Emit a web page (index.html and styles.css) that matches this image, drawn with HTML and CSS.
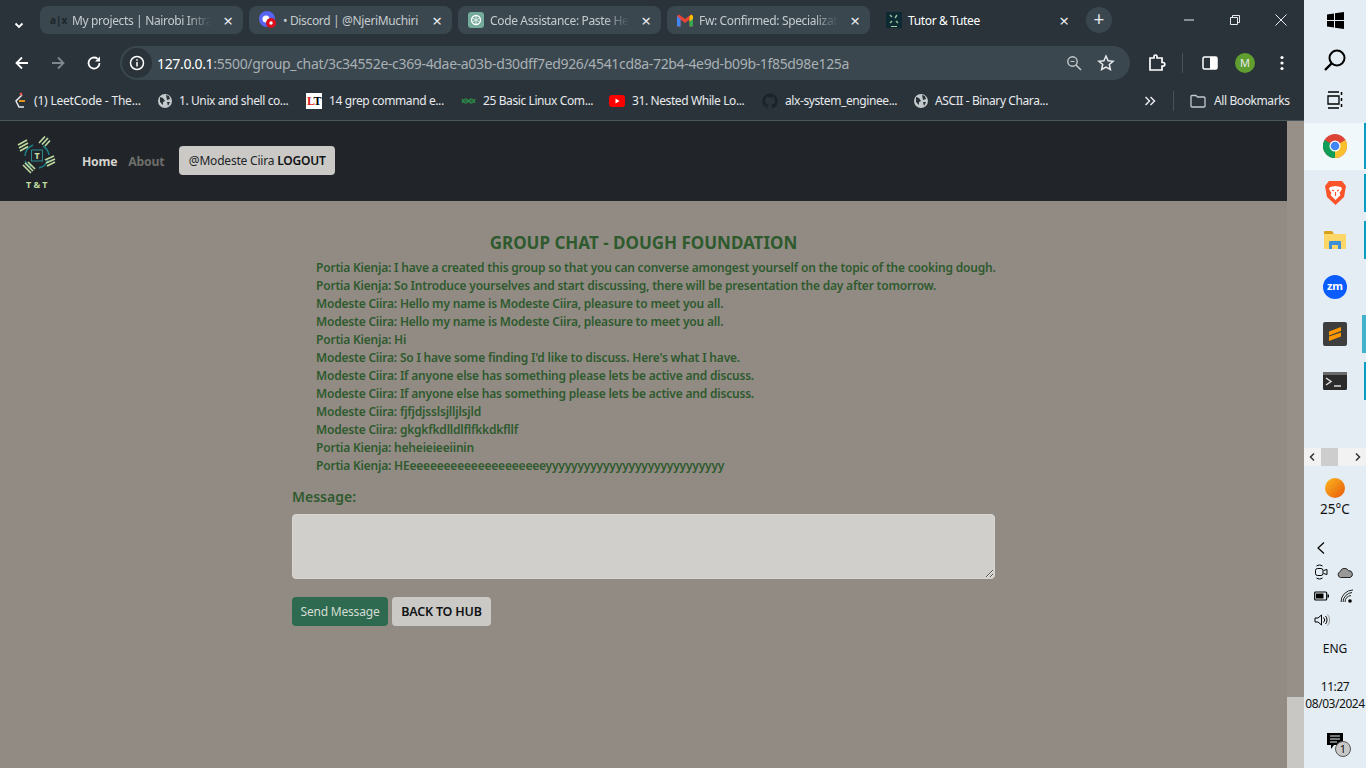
FILE: index.html
```html
<!DOCTYPE html>
<html lang="en">
<head>
  <meta charset="UTF-8">
  <title>Tutor &amp; Tutee</title>
  <link rel="stylesheet" href="styles.css">
</head>
<body>
<div class="screen">
  <div class="browser">
    <div class="tabstrip">
      <svg class="tab-menu" width="12" height="12" viewBox="0 0 12 12"><path d="M2.500 4.500 6 8l3.500-3.500" fill="none" stroke="#fff" stroke-width="1.800"/></svg>
      <div class="tab tab-fade">
        <span class="alx-icon">a|x</span>
        <span class="tab-title">My projects | Nairobi Intra</span>
        <span class="tab-x">×</span>
      </div>
      <div class="tab">
        <svg class="fav" width="18" height="18" viewBox="0 0 18 18"><circle cx="8" cy="8" r="8" fill="#5865f2"/><circle cx="7" cy="8" r="3.500" fill="#fff"/><circle cx="12" cy="12" r="5" fill="#d9101c"/><circle cx="12" cy="12" r="1.700" fill="#fff"/></svg>
        <span class="tab-title">• Discord | @NjeriMuchiri</span>
        <span class="tab-x">×</span>
      </div>
      <div class="tab tab-fade">
        <svg class="fav" width="16" height="16" viewBox="0 0 16 16"><rect width="16" height="16" rx="3" fill="#74aa9c"/><circle cx="8" cy="8" r="4.500" fill="none" stroke="#fff" stroke-width="1.300"/><path d="M8 3.500v9M4 5.800l8 4.400M12 5.800l-8 4.400" stroke="#fff" stroke-width=".7"/></svg>
        <span class="tab-title">Code Assistance: Paste He</span>
        <span class="tab-x">×</span>
      </div>
      <div class="tab tab-fade">
        <svg class="fav" width="16" height="13" viewBox="0 0 16 13"><path d="M0 2v9.500a1 1 0 0 0 1 1h2.500V5.500L8 9l4.500-3.500v7H15a1 1 0 0 0 1-1V2L14 .5 8 5 2 .5z" fill="#ea4335"/><path d="M0 2v9.500a1 1 0 0 0 1 1h2.500V5z" fill="#4285f4"/><path d="M16 2v9.500a1 1 0 0 1-1 1h-2.500V5z" fill="#34a853"/><path d="M12.500 2.500 14 .5 16 2v3l-3.500 2.500z" fill="#fbbc04"/></svg>
        <span class="tab-title">Fw: Confirmed: Specializat</span>
        <span class="tab-x">×</span>
      </div>
      <div class="tab tab-active">
        <svg class="fav" width="16" height="16" viewBox="0 0 16 16"><rect width="16" height="16" fill="#0d2a33"/><path d="M4 3l2 2M11 3 9 6M4 11l2-2M12 11l-2-2" stroke="#8fbf9a" stroke-width="1.500"/><rect x="5" y="14" width="6" height="1" fill="#9fcfa8"/></svg>
        <span class="tab-title">Tutor &amp; Tutee</span>
        <span class="tab-x">×</span>
      </div>
      <div class="new-tab">+</div>
      <div class="win-controls">
        <svg width="12" height="12" viewBox="0 0 12 12"><path d="M1 6h10" stroke="#e8eaed"/></svg>
        <svg width="12" height="12" viewBox="0 0 12 12"><path d="M1.500 3.500h7v7h-7zM3.500 3.500v-2h7v7h-2" fill="none" stroke="#e8eaed"/></svg>
        <svg width="12" height="12" viewBox="0 0 12 12"><path d="M.5.5l11 11M11.500.5l-11 11" stroke="#e8eaed"/></svg>
      </div>
    </div>

    <div class="toolbar">
      <svg class="tool-icon" width="16" height="16" viewBox="0 0 16 16"><path d="M14 8H3M8 2.500 2.500 8 8 13.500" fill="none" stroke="#fff" stroke-width="1.800"/></svg>
      <svg class="tool-icon" width="16" height="16" viewBox="0 0 16 16"><path d="M2 8h11M8 2.500 13.500 8 8 13.500" fill="none" stroke="#7d8890" stroke-width="1.800"/></svg>
      <svg class="tool-icon" width="16" height="16" viewBox="0 0 16 16"><path d="M13.500 8A5.500 5.500 0 1 1 11.500 3.800" fill="none" stroke="#fff" stroke-width="1.800"/><path d="M14 1.500v5h-5z" fill="#fff"/></svg>
      <div class="omnibox">
        <span class="site-info">
          <svg width="16" height="16" viewBox="0 0 16 16"><circle cx="8" cy="8" r="6.500" fill="none" stroke="#fff" stroke-width="1.500"/><path d="M8 7v4.500M8 4.300v1.500" stroke="#fff" stroke-width="1.500"/></svg>
        </span>
        <span class="url"><span class="url-host">127.0.0.1</span>:5500/group_chat/3c34552e-c369-4dae-a03b-d30dff7ed926/4541cd8a-72b4-4e9d-b09b-1f85d98e125a</span>
        <svg width="16" height="16" viewBox="0 0 16 16"><circle cx="6.500" cy="6.500" r="4.700" fill="none" stroke="#c4c9cc" stroke-width="1.400"/><path d="M10 10l5 5" stroke="#c4c9cc" stroke-width="1.600"/><path d="M4.500 6.500h4" stroke="#c4c9cc"/></svg>
        <svg class="star" width="18" height="18" viewBox="0 0 18 18"><path d="M9 2l2.100 4.700 5 .5-3.800 3.300 1.100 5L9 13l-4.400 2.500 1.100-5L1.900 7.200l5-.5z" fill="none" stroke="#e8eaed" stroke-width="1.500"/></svg>
      </div>
      <div class="toolbar-right">
        <svg width="18" height="18" viewBox="0 0 18 18"><path d="M2 4h4V2.500a1.500 1.500 0 0 1 3 0V4h5v4.500h1a1.800 1.800 0 0 1 0 3.600h-1V16H2z" fill="none" stroke="#fff" stroke-width="1.700"/></svg>
        <span class="tool-sep"></span>
        <svg width="16" height="16" viewBox="0 0 16 16"><rect x="1" y="2" width="14" height="12" rx="1.500" fill="none" stroke="#fff" stroke-width="1.500"/><rect x="8" y="2" width="7" height="12" fill="#fff"/></svg>
        <span class="avatar">M</span>
        <svg width="4" height="16" viewBox="0 0 4 16"><circle cx="2" cy="2.500" r="1.600" fill="#fff"/><circle cx="2" cy="8" r="1.600" fill="#fff"/><circle cx="2" cy="13.500" r="1.600" fill="#fff"/></svg>
      </div>
    </div>

    <div class="bookmarks">
      <div class="bookmark">
        <svg width="14" height="18" viewBox="0 0 14 18"><path d="M9 3 3 9l3 6h5" fill="none" stroke="#e8eaed" stroke-width="1.500"/><path d="M6 9h6" stroke="#f89f1b" stroke-width="1.800"/><circle cx="8" cy="2" r="1.500" fill="#d9534f"/></svg>
        <span>(1) LeetCode - The...</span>
      </div>
      <div class="bookmark">
        <svg width="14" height="14" viewBox="0 0 14 14"><circle cx="7" cy="7" r="7" fill="#c4c9cc"/><path d="M2 3l3 1 2 3-2 1v3L2 8zM8 1l3 1 1 3-3 1zM9 8h3l-2 4z" fill="#2a333a"/></svg>
        <span>1. Unix and shell co...</span>
      </div>
      <div class="bookmark">
        <span class="lt-icon"><span class="lt-red">L</span>T</span>
        <span>14 grep command e...</span>
      </div>
      <div class="bookmark">
        <svg width="15" height="14" viewBox="0 0 15 14"><path d="M1 7h13" stroke="#2e8b47"/><path d="M1 9c2-5 4-5 6.500-2s4.500 3 6.500-2M1 5c2 5 4 5 6.500 2s4.500-3 6.500 2" fill="none" stroke="#2e8b47" stroke-width="1.200"/></svg>
        <span>25 Basic Linux Com...</span>
      </div>
      <div class="bookmark">
        <svg width="16" height="12" viewBox="0 0 16 12"><rect width="16" height="12" rx="3" fill="#f00"/><path d="M6.500 3.500v5l4-2.500z" fill="#fff"/></svg>
        <span>31. Nested While Lo...</span>
      </div>
      <div class="bookmark">
        <svg width="16" height="16" viewBox="0 0 16 16"><path d="M8 .5a7.700 7.700 0 0 0-2.400 15c.4.100.5-.2.500-.4v-1.300c-2.100.4-2.600-.9-2.600-.9-.4-.9-.9-1.200-.9-1.200-.7-.5.100-.5.100-.5.800.1 1.200.8 1.200.8.700 1.200 1.900.9 2.300.7.100-.5.300-.9.500-1.100-1.700-.2-3.500-.9-3.500-3.800 0-.8.300-1.500.8-2-.1-.2-.4-1 .1-2 0 0 .6-.2 2.100.8a7 7 0 0 1 3.800 0c1.500-1 2.100-.8 2.100-.8.400 1 .2 1.800.1 2 .5.500.8 1.200.8 2 0 2.900-1.800 3.600-3.500 3.800.3.200.5.700.5 1.400v2.100c0 .2.100.5.500.4A7.700 7.700 0 0 0 8 .5z" fill="#1b2228"/></svg>
        <span>alx-system_enginee...</span>
      </div>
      <div class="bookmark">
        <svg width="14" height="14" viewBox="0 0 14 14"><circle cx="7" cy="7" r="7" fill="#c4c9cc"/><path d="M2 3l3 1 2 3-2 1v3L2 8zM8 1l3 1 1 3-3 1zM9 8h3l-2 4z" fill="#2a333a"/></svg>
        <span>ASCII - Binary Chara...</span>
      </div>
      <div class="bookmarks-end">
        <svg width="12" height="12" viewBox="0 0 12 12"><path d="M1.500 2l4 4-4 4M6.500 2l4 4-4 4" fill="none" stroke="#e8eaed" stroke-width="1.500"/></svg>
        <span class="tool-sep"></span>
        <svg width="16" height="14" viewBox="0 0 16 14"><path d="M1 2.500a1 1 0 0 1 1-1h4l1.500 1.500H14a1 1 0 0 1 1 1v8a1 1 0 0 1-1 1H2a1 1 0 0 1-1-1z" fill="none" stroke="#c4c9cc" stroke-width="1.300"/></svg>
        <span class="all-bm">All Bookmarks</span>
      </div>
    </div>

    <div class="viewport">
      <div class="page">
        <nav class="navbar">
          <div class="brand">
            <svg width="40" height="40" viewBox="0 0 40 40">
              <path d="M8 20A13 13 0 0 1 16 9M26 10a13 13 0 0 1 6 9M31 24a13 13 0 0 1-9 8M14 31a13 13 0 0 1-6-6" fill="none" stroke="#1d7f88" stroke-width="1.500"/>
              <path d="M1 9l9-5M2 12l9-5M3 15l8-4.500M22 7l6-6.500M25 8.500l6-6.500M28 10l5-5.500M28 24l9-4M29 27l9-4M30 30l8-4M6 29l8 8M8 27l8 8M11 26l7 7" stroke="#bcd9a0" stroke-width="1.700"/>
              <rect x="14.500" y="14" width="11" height="11" fill="none" stroke="#2a8a90"/>
            </svg>
            <span class="brand-t">T</span>
            <span class="brand-name">T&amp;T</span>
          </div>
          <a class="nav-link nav-active">Home</a>
          <a class="nav-link">About</a>
          <a class="btn btn-light logout">@Modeste Ciira <span class="logout-word">LOGOUT</span></a>
        </nav>

        <main class="chat">
          <h2 class="chat-title">GROUP CHAT - DOUGH FOUNDATION</h2>
          <ul class="messages">
            <li>Portia Kienja: I have a created this group so that you can converse amongest yourself on the topic of the cooking dough.</li>
            <li>Portia Kienja: So Introduce yourselves and start discussing, there will be presentation the day after tomorrow.</li>
            <li>Modeste Ciira: Hello my name is Modeste Ciira, pleasure to meet you all.</li>
            <li>Modeste Ciira: Hello my name is Modeste Ciira, pleasure to meet you all.</li>
            <li>Portia Kienja: Hi</li>
            <li>Modeste Ciira: So I have some finding I'd like to discuss. Here's what I have.</li>
            <li>Modeste Ciira: If anyone else has something please lets be active and discuss.</li>
            <li>Modeste Ciira: If anyone else has something please lets be active and discuss.</li>
            <li>Modeste Ciira: fjfjdjsslsjlljlsjld</li>
            <li>Modeste Ciira: gkgkfkdlldlflfkkdkfllf</li>
            <li>Portia Kienja: heheieieeiinin</li>
            <li>Portia Kienja: HEeeeeeeeeeeeeeeeeeeeeyyyyyyyyyyyyyyyyyyyyyyyyyyyy</li>
          </ul>
          <label class="msg-label" for="message">Message:</label>
          <textarea class="msg-input" id="message"></textarea>
          <div class="actions">
            <a class="btn btn-send">Send Message</a>
            <a class="btn btn-light btn-back">BACK TO HUB</a>
          </div>
        </main>
      </div>
      <div class="scrollbar"><div class="scroll-thumb"></div></div>
    </div>
  </div>

  <aside class="taskbar">
    <div class="task-slot slot-40">
      <svg width="17" height="17" viewBox="0 0 17 17"><path d="M0 2.500 7 1.500v6.500H0zM8 1.300 17 0v8H8zM0 9h7v6.500l-7-1zM8 9h9v8l-9-1.300z" fill="#000"/></svg>
    </div>
    <div class="task-slot slot-40">
      <svg width="24" height="24" viewBox="0 0 24 24"><circle cx="14" cy="10" r="7.500" fill="none" stroke="#000" stroke-width="2"/><path d="M8.500 15.500 2 22" stroke="#000" stroke-width="2.400"/></svg>
    </div>
    <div class="task-slot slot-view">
      <svg width="18" height="18" viewBox="0 0 18 18"><path d="M2 1h11M2 17h11M2 5h11v8H2z" fill="none" stroke="#000" stroke-width="1.300"/><path d="M15.500 1v3M15.500 7v3M15.500 13v3" stroke="#000" stroke-width="1.500"/></svg>
    </div>
    <div class="task-slot slot-47 slot-open slot-hot">
      <svg width="24" height="24" viewBox="0 0 24 24"><circle cx="12" cy="12" r="12" fill="#db4437"/><path d="M12 12 22.400 6A12 12 0 0 1 12 24z" fill="#fbc02d"/><path d="M12 12 12 24A12 12 0 0 1 1.600 6z" fill="#0f9d58"/><circle cx="12" cy="12" r="5.500" fill="#fff"/><circle cx="12" cy="12" r="4.300" fill="#4285f4"/></svg>
    </div>
    <div class="task-slot slot-47 slot-open">
      <svg width="21" height="24" viewBox="0 0 21 24"><path d="M4 0h13l4 5-2 11-8.500 8L2 16 0 5z" fill="#fb542b"/><path d="M10.500 5 5 6l-1 2 2.500 4-1 2 5 5 5-5-1-2L17 8l-1-2z" fill="#fff"/><path d="M7 9l2 1M14 9l-2 1M10.500 11v4" stroke="#fb542b" stroke-width="1.200"/></svg>
    </div>
    <div class="task-slot slot-47 slot-open">
      <svg width="22" height="18" viewBox="0 0 22 18"><path d="M0 1a1 1 0 0 1 1-1h7l2 3H0z" fill="#d9a21b"/><path d="M0 3h21a1 1 0 0 1 1 1v13a1 1 0 0 1-1 1H1a1 1 0 0 1-1-1z" fill="#fcd768"/><path d="M5 18v-7a1 1 0 0 1 1-1h10a1 1 0 0 1 1 1v7h-3v-4H8v4z" fill="#3e8fd6"/></svg>
    </div>
    <div class="task-slot slot-47">
      <span class="zoom-icon">zm</span>
    </div>
    <div class="task-slot slot-47 slot-open slot-wide">
      <svg width="24" height="24" viewBox="0 0 24 24"><rect width="24" height="24" rx="2" fill="#3e3e3e"/><path d="M6 9.500 18 5v4L6 13.500zM6 14.500 18 10.500v4L6 19z" fill="#ff9800"/></svg>
    </div>
    <div class="task-slot slot-47 slot-open">
      <svg width="24" height="18" viewBox="0 0 24 18"><rect width="24" height="18" rx="1.500" fill="#2b2b2b"/><rect width="24" height="3" fill="#6a6a6a"/><path d="M3 6l5 3.500L3 13" fill="none" stroke="#ddd" stroke-width="1.500"/><path d="M11 14h7" stroke="#ddd" stroke-width="1.500"/></svg>
    </div>
    <div class="task-scroller">
      <svg width="8" height="10" viewBox="0 0 8 10"><path d="M6 1.500 2.500 5 6 8.500" fill="none" stroke="#333" stroke-width="1.500"/></svg>
      <span class="task-scroll-thumb"></span>
      <svg class="scroller-next" width="8" height="10" viewBox="0 0 8 10"><path d="M2 1.500 5.500 5 2 8.500" fill="none" stroke="#333" stroke-width="1.500"/></svg>
    </div>
    <div class="weather">
      <span class="sun"></span>
      <span>25°C</span>
    </div>
    <div class="tray">
      <svg class="tray-arrow" width="10" height="14" viewBox="0 0 10 14"><path d="M8 1.500 2 7l6 5.500" fill="none" stroke="#000" stroke-width="1.200"/></svg>
      <svg width="14" height="16" viewBox="0 0 14 16"><rect x="1.500" y="4.500" width="7.500" height="7" rx="2" fill="none" stroke="#000"/><path d="M9.500 6.500 13 5.500v5L9.500 9.500M2.500 2c2-1.300 4-1.300 6 0M2.500 14c2 1.300 4 1.300 6 0" fill="none" stroke="#000"/></svg>
      <svg width="16" height="11" viewBox="0 0 16 11"><path d="M3.500 10.500a3 3 0 0 1-.3-5.800 4.500 4.500 0 0 1 8.300-1A3.500 3.500 0 0 1 13 10.500z" fill="#999" stroke="#222"/></svg>
      <svg width="15" height="10" viewBox="0 0 15 10"><rect x=".7" y="1" width="12" height="8" rx="1" fill="none" stroke="#000" stroke-width="1.200"/><rect x="2" y="2.500" width="7.500" height="5" fill="#000"/><rect x="13.500" y="3.500" width="1.500" height="3" fill="#000"/></svg>
      <svg class="tray-wifi" width="14" height="14" viewBox="0 0 14 14"><path d="M1 13A12 12 0 0 1 13 1M3 13A10 10 0 0 1 12 3.500M5 13A7 7 0 0 1 11 6.500" fill="none" stroke="#222"/><circle cx="10" cy="12" r="1.800" fill="#000"/></svg>
      <svg width="16" height="14" viewBox="0 0 16 14"><path d="M1 5h3l3.500-3v10L4 9H1z" fill="none" stroke="#000"/><path d="M9.500 4.500a3.500 3.500 0 0 1 0 5M11.500 3a6 6 0 0 1 0 8" fill="none" stroke="#000"/><path d="M13.500 1.500a8 8 0 0 1 0 11" fill="none" stroke="#999"/></svg>
    </div>
    <div class="lang">ENG</div>
    <div class="clock">
      <span>11:27</span>
      <span>08/03/2024</span>
    </div>
    <div class="notify">
      <svg width="16" height="16" viewBox="0 0 16 16"><path d="M0 0h16v12H7l-3 4v-4H0z" fill="#000"/><path d="M3 3h10M3 6h10M3 9h7" stroke="#e3edf3"/></svg>
      <span class="notify-badge">1</span>
    </div>
  </aside>
</div>
</body>
</html>
```

FILE: styles.css
```css
* {
  box-sizing: border-box;
}

html,
body {
  margin: 0;
  height: 100%;
  overflow: hidden;
}

body {
  font-family: "Noto Sans", "Open Sans", sans-serif;
}

.screen {
  display: flex;
  width: 1366px;
  height: 768px;
}

.browser {
  width: 1304px;
  display: flex;
  flex-direction: column;
  background-color: #2a333a;
  color: #e8eaed;
  font-size: 12px;
}

/* tabs */
.tabstrip {
  height: 42px;
  display: flex;
  align-items: flex-end;
  padding-left: 13px;
}

.tab-menu {
  margin-right: 15px;
  margin-bottom: 11px;
}

.tab {
  width: 203px;
  height: 28px;
  margin-right: 6px;
  margin-bottom: 8px;
  padding: 0 10px;
  display: flex;
  align-items: center;
  gap: 6px;
  border-radius: 8px;
  background-color: #3a474f;
  color: #c6cbce;
}

.tab-active {
  background-color: transparent;
  color: #fff;
  margin-right: 2px;
}

.fav {
  flex: none;
}

.alx-icon {
  width: 16px;
  flex: none;
  font-size: 10px;
  font-weight: 700;
  color: #1d2429;
}

.tab-title {
  flex: 1;
  white-space: nowrap;
  letter-spacing: -0.35px;
}

.tab-fade .tab-title {
  mask-image: linear-gradient(to right, #000 calc(100% - 30px), transparent calc(100% - 6px));
}

.tab-x {
  font-size: 17px;
  line-height: 1;
  color: #e8eaed;
}

.new-tab {
  width: 26px;
  height: 26px;
  margin-bottom: 9px;
  margin-left: 5px;
  border-radius: 50%;
  background-color: #3a474f;
  text-align: center;
  font-size: 19px;
  line-height: 25px;
}

.win-controls {
  margin-left: auto;
  margin-right: 17px;
  margin-bottom: 16px;
  display: flex;
  gap: 34px;
}

/* toolbar */
.toolbar {
  height: 42px;
  display: flex;
  align-items: center;
  padding-left: 14px;
}

.tool-icon {
  margin-right: 20px;
}

.toolbar .tool-icon:nth-child(3) {
  margin-right: 18px;
}

.omnibox {
  width: 1010px;
  height: 34px;
  padding: 0 15px 0 2px;
  display: flex;
  align-items: center;
  border-radius: 17px;
  background-color: #3a474f;
  font-size: 14px;
}

.site-info {
  width: 30px;
  height: 30px;
  margin-right: 5px;
  display: flex;
  align-items: center;
  justify-content: center;
  border-radius: 50%;
  background-color: #2a333a;
}

.url {
  flex: 1;
  white-space: nowrap;
  color: #a9b0b4;
  letter-spacing: -0.34px;
}

.url-host {
  color: #fff;
}

.star {
  margin-left: 15px;
}

.toolbar-right {
  flex: 1;
  display: flex;
  align-items: center;
  padding-left: 18px;
  gap: 17px;
}

.tool-sep {
  width: 1px;
  height: 20px;
  background-color: #46535b;
}

.toolbar-right .tool-sep {
  margin: 0 2px 0 -1px;
}

.avatar {
  width: 20px;
  height: 20px;
  margin: 0 8px 0 0;
  border-radius: 50%;
  background-color: #5f9e2f;
  text-align: center;
  font-size: 11px;
  line-height: 20px;
}

/* bookmarks */
.bookmarks {
  height: 37px;
  display: grid;
  grid-template-columns: 145px 148px 155px 148px 153px 152px 229px 1fr;
  align-items: center;
  padding: 0 0 3px 13px;
  border-bottom: 1px solid #4a555c;
}

.bookmark {
  display: flex;
  align-items: center;
  gap: 7px;
  white-space: nowrap;
  letter-spacing: -0.4px;
}

.bookmark:first-child {
  letter-spacing: -0.2px;
}

.lt-icon {
  width: 16px;
  height: 16px;
  background-color: #fff;
  color: #000;
  font-family: "Liberation Serif", serif;
  font-size: 12px;
  font-weight: 700;
  line-height: 16px;
  text-align: center;
}

.lt-red {
  color: #d81e1e;
}

.bookmarks-end {
  display: flex;
  align-items: center;
  margin-left: 1px;
  white-space: nowrap;
  letter-spacing: -0.4px;
}

.bookmarks-end .tool-sep {
  margin: 0 16px 0 17px;
}

.all-bm {
  margin-left: 8px;
}

/* page */
.viewport {
  flex: 1;
  display: flex;
  min-height: 0;
}

.page {
  flex: 1;
  background-color: #928b84;
}

.scrollbar {
  width: 17px;
  display: flex;
  flex-direction: column;
  justify-content: flex-end;
  background-color: #979089;
}

.scroll-thumb {
  height: 71px;
  background-color: #c8c7c3;
}

.navbar {
  height: 80px;
  padding-left: 17px;
  display: flex;
  align-items: center;
  background-color: #212529;
}

.brand {
  position: relative;
  width: 40px;
  margin-top: 4px;
  margin-right: 25px;
  display: flex;
  flex-direction: column;
  align-items: center;
}

.brand-t {
  position: absolute;
  top: 13px;
  left: 0;
  width: 40px;
  text-align: center;
  font-size: 9px;
  font-weight: 700;
  color: #c5e0a8;
}

.brand-name {
  margin-top: 3px;
  padding-left: 2px;
  font-size: 9px;
  font-weight: 700;
  letter-spacing: 2.500px;
  line-height: 11px;
  color: #bcd9a0;
}

.nav-link {
  margin-right: 11px;
  font-size: 12.200px;
  font-weight: 700;
  color: #6e6e6b;
  letter-spacing: -0.2px;
}

.nav-active {
  color: #d5d3ce;
}

.btn {
  display: block;
  height: 29px;
  border-radius: 4px;
  text-align: center;
  font-size: 12px;
  line-height: 29px;
  letter-spacing: -0.2px;
}

.btn-light {
  background-color: #cbc9c5;
  color: #212529;
}

.logout {
  width: 156px;
  margin-left: 4px;
  margin-top: -1px;
}

.logout-word {
  font-weight: 600;
  color: #101316;
}

/* chat */
.chat {
  width: 703px;
  margin-left: 292px;
  padding-top: 30px;
  color: #2e5a2e;
}

.chat-title {
  margin: 0 0 4px;
  text-align: center;
  font-size: 17px;
  font-weight: 700;
  line-height: 24px;
}

.messages {
  margin: 0 0 11px;
  padding: 0 0 0 24px;
  list-style: none;
  font-size: 12px;
  font-weight: 600;
  line-height: 18px;
  letter-spacing: -0.2px;
  white-space: nowrap;
}

.msg-label {
  display: block;
  margin-bottom: 7px;
  font-size: 14px;
  font-weight: 600;
  line-height: 21px;
}

.msg-input {
  display: block;
  width: 100%;
  height: 65px;
  border: 1px solid #d9d7d3;
  border-radius: 4px;
  background-color: #d0cfcb;
}

.actions {
  margin-top: 18px;
  display: flex;
  gap: 4px;
}

.btn-send {
  width: 96px;
  background-color: #2d6a4f;
  color: #d5ddd5;
}

.btn-back {
  width: 99px;
  font-size: 12.500px;
  font-weight: 600;
  color: #101316;
}

/* windows taskbar */
.taskbar {
  flex: 1;
  display: flex;
  flex-direction: column;
  align-items: center;
  background-color: #e3edf3;
  color: #111;
  font-size: 12px;
}

.task-slot {
  width: 100%;
  flex: none;
  display: flex;
  align-items: center;
  justify-content: center;
  position: relative;
}

.slot-40 {
  height: 40px;
}

.slot-view {
  height: 43px;
  padding-bottom: 4px;
}

.slot-47 {
  height: 47px;
  padding-bottom: 2px;
}

.slot-open::after {
  content: "";
  position: absolute;
  top: 4px;
  bottom: 5px;
  right: 0;
  width: 2px;
  background-color: #0a9cc0;
}

.slot-wide::after {
  width: 4px;
  background-color: #43b1cc;
}

.slot-hot {
  background-color: #f1f8fb;
}

.slot-hot::after {
  top: 0;
  bottom: 1px;
}

.zoom-icon {
  width: 24px;
  height: 24px;
  border-radius: 50%;
  background-color: #0b5cff;
  color: #fff;
  text-align: center;
  font-size: 11px;
  font-weight: 700;
  line-height: 22px;
}

.task-scroller {
  width: 100%;
  height: 18px;
  flex: none;
  margin-top: 43px;
  padding: 0 4px;
  display: flex;
  align-items: center;
  background-color: #f2f2f2;
}

.task-scroll-thumb {
  width: 17px;
  height: 18px;
  margin-left: 5px;
  background-color: #cdcdcd;
}

.scroller-next {
  margin-left: auto;
}

.weather {
  margin-top: 12px;
  display: flex;
  flex-direction: column;
  align-items: center;
  gap: 2px;
  font-size: 13.500px;
}

.sun {
  width: 20px;
  height: 20px;
  border-radius: 50%;
  background: linear-gradient(135deg, #fbb81f, #e8590c);
}

.tray {
  margin-top: 18px;
  width: 100%;
  padding-left: 10px;
  display: grid;
  grid-template-columns: 23px 23px;
  grid-auto-rows: 24px;
  align-items: center;
  justify-items: start;
}

.tray-arrow {
  grid-column: 1 / 3;
  margin-left: 2px;
}

.tray-wifi {
  margin-left: 3px;
}

.lang {
  margin-top: 8px;
}

.clock {
  margin-top: 21px;
  display: flex;
  flex-direction: column;
  align-items: center;
  line-height: 17px;
  letter-spacing: -0.45px;
}

.notify {
  position: relative;
  margin-top: 21px;
}

.notify-badge {
  position: absolute;
  top: 8px;
  left: 8px;
  width: 16px;
  height: 16px;
  border: 1px solid #555;
  border-radius: 50%;
  background-color: #c8c8c8;
  text-align: center;
  font-size: 11px;
  line-height: 14px;
}
```
